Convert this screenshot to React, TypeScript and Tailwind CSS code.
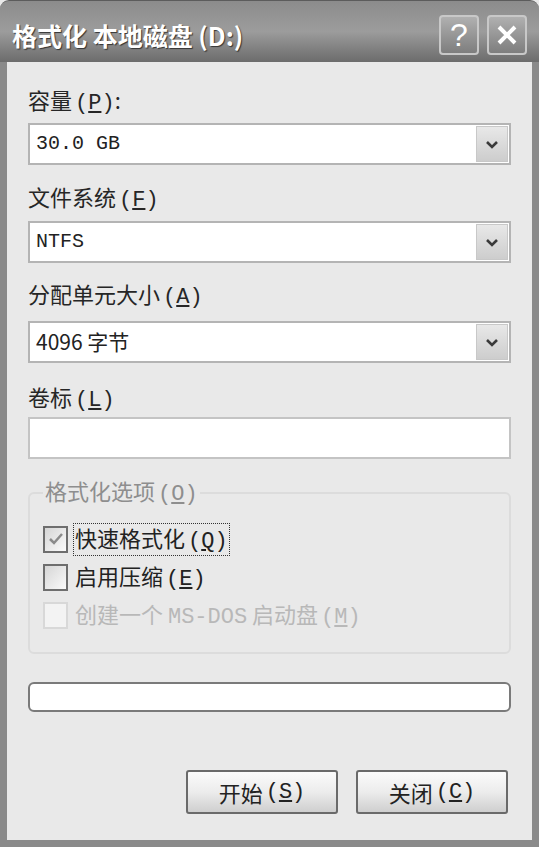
import React from 'react';

const cjk = { fontFamily: '"Noto Sans CJK SC", "Liberation Sans", sans-serif' };
const mono = { fontFamily: '"Liberation Mono", "Noto Sans CJK SC", monospace' };

function Key({ k }: { k: string }) {
  return (
    <span className="ml-[3px]" style={mono}>
      (<span className="underline underline-offset-2">{k}</span>)
    </span>
  );
}

function Chevron() {
  return (
    <svg width="14" height="9" viewBox="0 0 14 9">
      <path d="M2 2 L7 7 L12 2" fill="none" stroke="#3a3a3a" strokeWidth="2.6" />
    </svg>
  );
}

function Combo({ value, monoFont = true }: { value: string; monoFont?: boolean }) {
  return (
    <div className="flex h-[42px] border-2 border-[#b4b4b4] bg-white">
      <div
        className={`flex flex-1 items-center pl-[6px] text-[#222] ${monoFont ? 'text-[20px]' : 'text-[21px]'}`}
        style={monoFont ? mono : cjk}
      >
        {value}
      </div>
      <div className="m-[1px] flex w-[32px] items-center justify-center border border-[#c8c8c8] bg-gradient-to-b from-[#e8e8e8] to-[#cdcdcd]">
        <Chevron />
      </div>
    </div>
  );
}

function Label({ children, className = '' }: { children: React.ReactNode; className?: string }) {
  return (
    <div className={`h-[26px] text-[22px] leading-[24px] text-[#262626] ${className}`} style={cjk}>
      {children}
    </div>
  );
}

function CheckBox({ checked = false, disabled = false }: { checked?: boolean; disabled?: boolean }) {
  return (
    <div
      className={`flex h-[27px] w-[25px] shrink-0 items-center justify-center border-2 ${
        disabled ? 'border-[#d8d8d8] bg-[#f3f3f3]' : 'border-[#6e6e6e] bg-gradient-to-br from-[#d6d6d6] to-[#fafafa]'
      }`}
    >
      {checked && (
        <svg width="16" height="14" viewBox="0 0 16 14">
          <path d="M2 7 L6 11 L14 2" fill="none" stroke="#8a8a8a" strokeWidth="2.5" />
        </svg>
      )}
    </div>
  );
}

function Button({ children }: { children: React.ReactNode }) {
  return (
    <button
      className="flex h-[44px] w-[152px] items-center justify-center rounded-[3px] border-2 border-[#6a6a6a] bg-gradient-to-b from-[#fbfbfb] via-[#ececec] to-[#cfcfcf] text-[22px] text-[#222]"
      style={cjk}
    >
      {children}
    </button>
  );
}

export default function App() {
  return (
    <div className="flex h-[847px] w-[539px] flex-col overflow-hidden bg-[#e9e9e9]">
      {/* title bar */}
      <div className="flex h-[62px] shrink-0 items-center justify-between rounded-t-[9px] border-t border-[#5c5c5c] bg-gradient-to-b from-[#8c8c8c] via-[#9c9c9c] to-[#6c6c6c] pl-[12px] pr-[12px]">
        <div
          className="pt-[8px] text-[25px] font-bold text-white [text-shadow:1px_1px_1px_#333]"
          style={cjk}
        >
          格式化 本地磁盘 (D:)
        </div>
        <div className="flex gap-[8px] pt-[6px]">
          <div className="flex h-[40px] w-[40px] items-center justify-center rounded-[4px] border-2 border-[#c8c8c8] bg-gradient-to-b from-[#b0b0b0] to-[#7e7e7e] text-[32px] leading-none text-white" style={{ fontFamily: '"Liberation Sans", sans-serif' }}>
            ?
          </div>
          <div className="flex h-[40px] w-[40px] items-center justify-center rounded-[4px] border-2 border-[#c8c8c8] bg-gradient-to-b from-[#b0b0b0] to-[#7e7e7e]">
            <svg width="24" height="24" viewBox="0 0 24 24">
              <path d="M4 4 L20 20 M20 4 L4 20" stroke="white" strokeWidth="4" />
            </svg>
          </div>
        </div>
      </div>

      {/* body */}
      <div className="flex flex-1 flex-col border-x-[7px] border-b-[7px] border-[#8a8a8a] px-[21px] pt-[25px]">
        <Label>
          容量<Key k="P" />:
        </Label>
        <div className="mt-[10px]">
          <Combo value="30.0 GB" />
        </div>

        <Label className="mt-[19px]">
          文件系统<Key k="F" />
        </Label>
        <div className="mt-[11px]">
          <Combo value="NTFS" />
        </div>

        <Label className="mt-[18px]">
          分配单元大小<Key k="A" />
        </Label>
        <div className="mt-[14px]">
          <Combo value="4096 字节" monoFont={false} />
        </div>

        <Label className="mt-[21px]">
          卷标<Key k="L" />
        </Label>
        <div className="mt-[7px] h-[42px] border-2 border-[#c4c4c4] bg-white" />

        <fieldset className="mt-[18px] h-[177px] rounded-[6px] border-2 border-[#dcdcdc] px-[13px] pt-[16px]">
          <legend className="px-[2px] text-[22px] leading-[26px] text-[#8e8e8e]" style={cjk}>
            格式化选项<Key k="O" />
          </legend>
          <div className="flex h-[30px] items-center gap-[5px]">
            <CheckBox checked />
            <div className="border border-dotted border-[#333] px-[1px] text-[22px] leading-[26px] text-[#222]" style={cjk}>
              快速格式化<Key k="Q" />
            </div>
          </div>
          <div className="mt-[8px] flex h-[30px] items-center gap-[7px]">
            <CheckBox />
            <div className="text-[22px] leading-[26px] text-[#222]" style={cjk}>
              启用压缩<Key k="E" />
            </div>
          </div>
          <div className="mt-[8px] flex h-[30px] items-center gap-[7px]">
            <CheckBox disabled />
            <div className="text-[22px] leading-[26px] text-[#b8b8b8]" style={cjk}>
              创建一个 <span style={mono}>MS-DOS</span> 启动盘<Key k="M" />
            </div>
          </div>
        </fieldset>

        <div className="mt-[28px] h-[30px] rounded-[6px] border-2 border-[#7a7a7a] bg-white" />

        <div className="mt-[58px] flex justify-end gap-[18px] pr-[3px]">
          <Button>
            开始<Key k="S" />
          </Button>
          <Button>
            关闭<Key k="C" />
          </Button>
        </div>
      </div>
    </div>
  );
}
